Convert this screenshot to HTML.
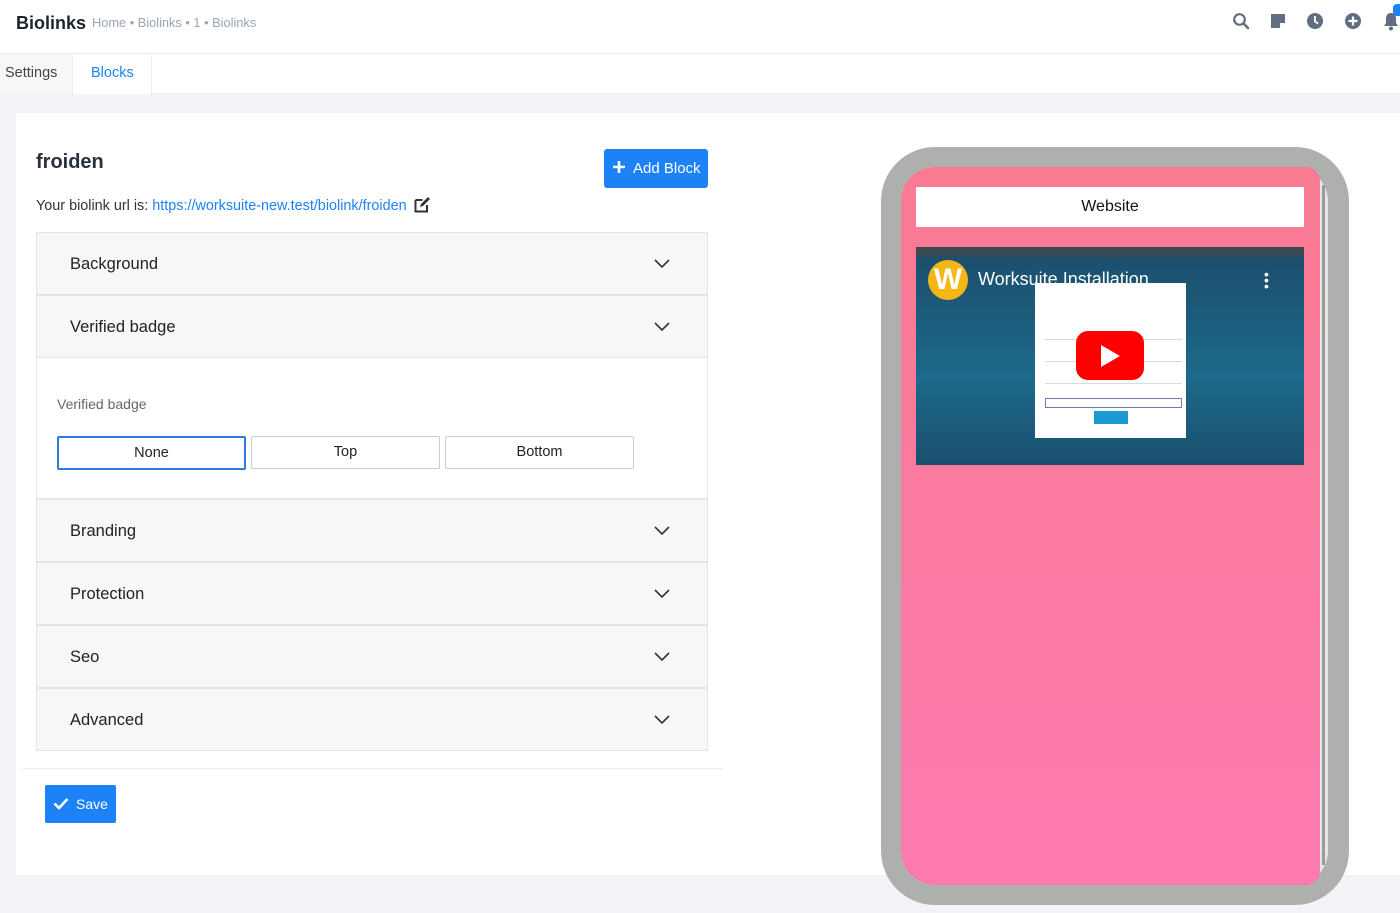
<!DOCTYPE html>
<html><head><meta charset="utf-8"><style>
*{box-sizing:border-box;margin:0;padding:0}
body{width:1400px;height:913px;overflow:hidden;background:#f2f3f6;font-family:"Liberation Sans",sans-serif;position:relative;color:#28313c}
.a{position:absolute}
.hdr{left:0;top:0;width:1400px;height:54px;background:#fff;border-bottom:1px solid #e8eef3}
.tabs{left:0;top:54px;width:1400px;height:40px;background:#fff;border-bottom:1px solid #e8eef3}
.card{left:16px;top:113px;width:1384px;height:762px;background:#fff}
.acc{left:36px;width:672px;height:63px;background:#f7f7f7;border:1px solid #e5e5e5;font-size:16.5px;color:#222}
.acc span{position:absolute;left:33px;top:22px}
.acc svg{position:absolute;left:617px;top:26px}
.btn{height:33px;border:1px solid #ccc;border-radius:2px;font-size:14.5px;text-align:center;line-height:31px;color:#222;background:#fff}
.ln{position:absolute;left:10px;width:137px;height:1px;background:#d5dbe0}
</style></head><body>
<div class="a hdr">
 <div class="a" style="left:16px;top:13px;font-size:18px;font-weight:bold;color:#1d2430">Biolinks</div>
 <div class="a" style="left:92px;top:15px;font-size:12.8px;color:#99a5b5">Home • Biolinks • 1 • Biolinks</div>
 <svg class="a" style="left:1232px;top:12px" width="18" height="18" viewBox="0 0 18 18"><circle cx="7.5" cy="7.5" r="5.3" fill="none" stroke="#616e80" stroke-width="2.2"/><path d="M11.5 11.5L16 16" stroke="#616e80" stroke-width="2.6" stroke-linecap="round"/></svg>
 <svg class="a" style="left:1270px;top:13px" width="16" height="16" viewBox="0 0 16 16"><path d="M1 1h14v9l-5 5H1z" fill="#616e80"/><path d="M10 15v-5h5" fill="#fff"/></svg>
 <svg class="a" style="left:1306px;top:12px" width="18" height="18" viewBox="0 0 18 18"><circle cx="9" cy="9" r="8" fill="#616e80"/><path d="M9 4v5.5l3 2" stroke="#fff" stroke-width="1.8" fill="none"/></svg>
 <svg class="a" style="left:1344px;top:12px" width="18" height="18" viewBox="0 0 18 18"><circle cx="9" cy="9" r="8" fill="#616e80"/><path d="M9 4.5v9M4.5 9h9" stroke="#fff" stroke-width="2.2"/></svg>
 <svg class="a" style="left:1382px;top:11px" width="18" height="20" viewBox="0 0 18 20"><path d="M9 2c-4 0-5 3-5 6v4l-2 3h14l-2-3V8c0-3-1-6-5-6z" fill="#616e80"/><circle cx="9" cy="17.5" r="2" fill="#616e80"/></svg>
 <div class="a" style="left:1393px;top:4px;width:10px;height:12px;border-radius:4px;background:#1d82f5"></div>
</div>
<div class="a tabs">
 <div class="a" style="left:0;top:0;width:73px;height:40px;background:#f7f7f7;border-right:1px solid #e8eef3;font-size:14.5px;color:#444;padding:11px 0 0 5px">Settings</div>
 <div class="a" style="left:73px;top:0;width:79px;height:40px;background:#fff;border-right:1px solid #e8eef3;font-size:14.5px;color:#1d82f5;padding:11px 0 0 18px">Blocks</div>
</div>
<div class="a card"></div>
<div class="a" style="left:36px;top:151px;font-size:20px;font-weight:bold;color:#28313c">froiden</div>
<div class="a" style="left:604px;top:149px;width:104px;height:39px;background:#1d82f5;border-radius:3px;color:#fff;font-size:15px;line-height:39px;padding-left:29px">Add Block</div>
<svg class="a" style="left:612px;top:160px" width="14" height="14"><path d="M7 1v12M1 7h12" stroke="#fff" stroke-width="2.6"/></svg>
<div class="a" style="left:36px;top:198px;font-size:14.4px;color:#333">Your biolink url is: <span style="color:#1d82f5">https://worksuite-new.test/biolink/froiden</span></div>
<svg class="a" style="left:414px;top:197px" width="17" height="16" viewBox="0 0 17 16"><path d="M1.5 3h7M1.5 3v11.5h11.5V8" fill="none" stroke="#333" stroke-width="2"/><path d="M6 10l1-3 7-7 2 2-7 7z" fill="#333"/></svg>
<div class="a acc" style="top:232px"><span>Background</span><svg width="16" height="10"><path d="M1 1l7 7 7-7" fill="none" stroke="#333" stroke-width="1.6"/></svg></div>
<div class="a acc" style="top:295px"><span>Verified badge</span><svg width="16" height="10"><path d="M1 1l7 7 7-7" fill="none" stroke="#333" stroke-width="1.6"/></svg></div>
<div class="a" style="left:36px;top:358px;width:672px;height:141px;background:#fff;border:1px solid #e5e5e5;border-top:none"></div>
<div class="a" style="left:57px;top:396px;font-size:14px;color:#666">Verified badge</div>
<div class="a btn" style="left:57px;top:436px;width:189px;height:34px;border:2px solid #2d7ce0">None</div>
<div class="a btn" style="left:251px;top:436px;width:189px">Top</div>
<div class="a btn" style="left:445px;top:436px;width:189px">Bottom</div>
<div class="a acc" style="top:499px"><span>Branding</span><svg width="16" height="10"><path d="M1 1l7 7 7-7" fill="none" stroke="#333" stroke-width="1.6"/></svg></div>
<div class="a acc" style="top:562px"><span>Protection</span><svg width="16" height="10"><path d="M1 1l7 7 7-7" fill="none" stroke="#333" stroke-width="1.6"/></svg></div>
<div class="a acc" style="top:625px"><span>Seo</span><svg width="16" height="10"><path d="M1 1l7 7 7-7" fill="none" stroke="#333" stroke-width="1.6"/></svg></div>
<div class="a acc" style="top:688px"><span>Advanced</span><svg width="16" height="10"><path d="M1 1l7 7 7-7" fill="none" stroke="#333" stroke-width="1.6"/></svg></div>
<div class="a" style="left:22px;top:768px;width:701px;height:1px;background:#e8eef3"></div>
<div class="a" style="left:45px;top:785px;width:71px;height:38px;background:#1d82f5;border-radius:2px;color:#fff;font-size:14px;line-height:38px;padding-left:31px">Save</div>
<svg class="a" style="left:53px;top:797px" width="16" height="13"><path d="M1.5 6.5l4.5 4.5 8.5-9" fill="none" stroke="#fff" stroke-width="2.6"/></svg>
<!-- phone -->
<div class="a" style="left:881px;top:147px;width:468px;height:758px;background:#adb0ad;border-radius:54px"></div>
<div class="a" style="left:901px;top:167px;width:427px;height:718px;background:#e6e6e6;border-radius:34px"></div>
<div class="a" style="left:901px;top:167px;width:419px;height:718px;background:linear-gradient(#f97a92,#fd7ab0);border-radius:34px 14px 14px 34px"></div>
<div class="a" style="left:1322px;top:185px;width:3px;height:680px;background:#9a9d9a"></div>
<div class="a" style="left:916px;top:187px;width:388px;height:40px;background:#fff;font-size:16px;text-align:center;line-height:40px;color:#111">Website</div>
<div class="a" style="left:916px;top:247px;width:388px;height:218px;background:linear-gradient(#1b4d6b,#1d6a8a 60%,#1a4f6e);overflow:hidden">
 <div class="a" style="left:0;top:0;width:388px;height:10px;background:#3a4a55"></div>
 <div class="a" style="left:119px;top:36px;width:151px;height:155px;background:#fff">
  <div class="ln" style="top:56px"></div><div class="ln" style="top:78px"></div><div class="ln" style="top:100px"></div>
  <div class="a" style="left:10px;top:115px;width:137px;height:10px;border:1px solid #6d7fa6"></div>
 </div>
 <div class="a" style="left:12px;top:13px;width:40px;height:40px;border-radius:50%;background:#f5b716;color:#fff;font-size:30px;font-weight:bold;text-align:center;line-height:40px">W</div>
 <div class="a" style="left:62px;top:22px;font-size:18px;color:#fff">Worksuite Installation</div>
 <div class="a" style="left:348px;top:24px;width:5px;height:18px;color:#fff;font-size:14px;line-height:6px">•<br>•<br>•</div>
 <div class="a" style="left:160px;top:84px;width:68px;height:49px;background:#f00;border-radius:12px"></div>
 <svg class="a" style="left:185px;top:98px" width="20" height="22"><path d="M0 0l19 11L0 22z" fill="#fff"/></svg>
 <div class="a" style="left:178px;top:164px;width:34px;height:13px;background:#1c9ad6"></div>
</div>
</body></html>
